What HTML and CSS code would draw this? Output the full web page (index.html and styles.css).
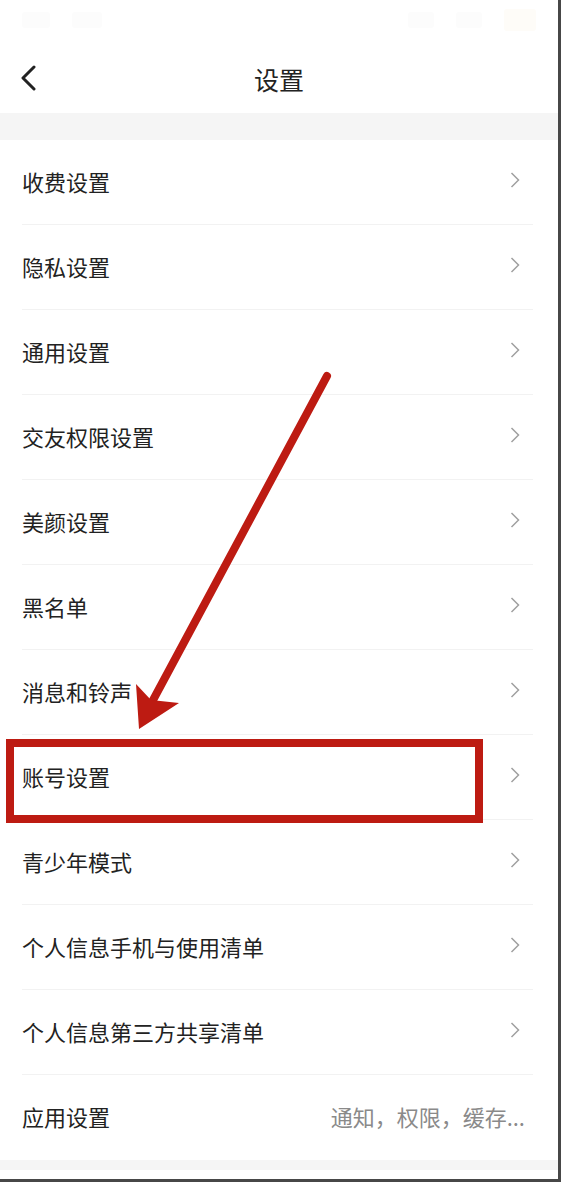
FILE: index.html
```html
<!DOCTYPE html>
<html lang="zh-CN">
<head>
<meta charset="utf-8">
<title>设置</title>
<link rel="stylesheet" href="styles.css">
</head>
<body>
<div class="screen">
  <div class="status">
    <span class="blob b1"></span><span class="blob b2"></span>
    <span class="spacer"></span>
    <span class="blob b3"></span><span class="blob b4"></span><span class="blob b5"></span>
  </div>
  <div class="nav">
    <svg class="back" width="16" height="26" viewBox="0 0 16 26"><path d="M14 2 L3 13 L14 24" fill="none" stroke="#222" stroke-width="3" stroke-linecap="round" stroke-linejoin="round"/></svg>
    <div class="title">设置</div>
  </div>
  <div class="band"></div>
  <ul class="list">
    <li class="row"><span class="label">收费设置</span><svg class="chev" width="10" height="16" viewBox="0 0 10 16"><path d="M1.5 1 L8.5 8 L1.5 15" fill="none" stroke="#a0a0a0" stroke-width="1.5"/></svg></li>
    <li class="row"><span class="label">隐私设置</span><svg class="chev" width="10" height="16" viewBox="0 0 10 16"><path d="M1.5 1 L8.5 8 L1.5 15" fill="none" stroke="#a0a0a0" stroke-width="1.5"/></svg></li>
    <li class="row"><span class="label">通用设置</span><svg class="chev" width="10" height="16" viewBox="0 0 10 16"><path d="M1.5 1 L8.5 8 L1.5 15" fill="none" stroke="#a0a0a0" stroke-width="1.5"/></svg></li>
    <li class="row"><span class="label">交友权限设置</span><svg class="chev" width="10" height="16" viewBox="0 0 10 16"><path d="M1.5 1 L8.5 8 L1.5 15" fill="none" stroke="#a0a0a0" stroke-width="1.5"/></svg></li>
    <li class="row"><span class="label">美颜设置</span><svg class="chev" width="10" height="16" viewBox="0 0 10 16"><path d="M1.5 1 L8.5 8 L1.5 15" fill="none" stroke="#a0a0a0" stroke-width="1.5"/></svg></li>
    <li class="row"><span class="label">黑名单</span><svg class="chev" width="10" height="16" viewBox="0 0 10 16"><path d="M1.5 1 L8.5 8 L1.5 15" fill="none" stroke="#a0a0a0" stroke-width="1.5"/></svg></li>
    <li class="row"><span class="label">消息和铃声</span><svg class="chev" width="10" height="16" viewBox="0 0 10 16"><path d="M1.5 1 L8.5 8 L1.5 15" fill="none" stroke="#a0a0a0" stroke-width="1.5"/></svg></li>
    <li class="row"><span class="label">账号设置</span><svg class="chev" width="10" height="16" viewBox="0 0 10 16"><path d="M1.5 1 L8.5 8 L1.5 15" fill="none" stroke="#a0a0a0" stroke-width="1.5"/></svg></li>
    <li class="row"><span class="label">青少年模式</span><svg class="chev" width="10" height="16" viewBox="0 0 10 16"><path d="M1.5 1 L8.5 8 L1.5 15" fill="none" stroke="#a0a0a0" stroke-width="1.5"/></svg></li>
    <li class="row"><span class="label">个人信息手机与使用清单</span><svg class="chev" width="10" height="16" viewBox="0 0 10 16"><path d="M1.5 1 L8.5 8 L1.5 15" fill="none" stroke="#a0a0a0" stroke-width="1.5"/></svg></li>
    <li class="row"><span class="label">个人信息第三方共享清单</span><svg class="chev" width="10" height="16" viewBox="0 0 10 16"><path d="M1.5 1 L8.5 8 L1.5 15" fill="none" stroke="#a0a0a0" stroke-width="1.5"/></svg></li>
    <li class="row last"><span class="label">应用设置</span><span class="value">通知，权限，缓存...</span></li>
  </ul>
  <div class="band band-bottom"></div>
  <div class="foot"></div>

  <div class="highlight"></div>
  <svg class="arrow" width="558" height="1179" viewBox="0 0 558 1179">
    <line x1="327" y1="376" x2="152" y2="702" stroke="#bd1b12" stroke-width="8" stroke-linecap="round"/>
    <polygon points="139,729 136,684 151,700 179,703" fill="#bd1b12"/>
  </svg>
</div>
</body>
</html>
```

FILE: styles.css
```css
html, body {
  margin: 0;
  padding: 0;
  background: #ffffff;
}

.screen {
  position: relative;
  width: 558px;
  height: 1179px;
  border-right: 3px solid #474747;
  border-bottom: 3px solid #474747;
  background: #ffffff;
  font-family: "Noto Sans CJK SC", "Noto Sans", sans-serif;
  overflow: hidden;
}

.status {
  height: 40px;
  display: flex;
  align-items: center;
  padding: 0 22px;
  gap: 22px;
  box-sizing: border-box;
}

.blob {
  display: block;
  height: 16px;
  background: #fcfcfc;
  border-radius: 3px;
}
.b1 { width: 28px; }
.b2 { width: 30px; }
.b3 { width: 26px; }
.b4 { width: 26px; }
.b5 { width: 32px; height: 22px; background: #fefcf8; }
.spacer { flex: 1; }

.nav {
  height: 73px;
  position: relative;
  display: flex;
  align-items: center;
  justify-content: center;
}

.back {
  position: absolute;
  left: 20px;
  top: 25px;
}

.title {
  font-size: 25px;
  color: #222222;
  line-height: 1;
  margin-top: 6px;
}

.band {
  height: 27px;
  background: #f5f5f5;
}

.list {
  list-style: none;
  margin: 0;
  padding: 0;
}

.row {
  height: 85px;
  display: flex;
  align-items: center;
  justify-content: space-between;
  margin: 0 25px 0 22px;
  border-bottom: 1px solid #f2f2f2;
  box-sizing: border-box;
}

.row.last {
  border-bottom: none;
  margin-right: 33px;
}

.label {
  font-size: 22px;
  color: #222222;
  line-height: 1;
  margin-top: -3px;
}

.chev {
  margin-right: 13px;
  margin-top: -4px;
}

.value {
  font-size: 22px;
  color: #8a8a8a;
  line-height: 1;
  margin-top: -3px;
}

.band-bottom {
  height: 10px;
}

.foot {
  height: 9px;
}

.highlight {
  position: absolute;
  left: 6px;
  top: 739px;
  width: 477px;
  height: 84px;
  border: 8px solid #bd1b12;
  box-sizing: border-box;
}

.arrow {
  position: absolute;
  left: 0;
  top: 0;
  pointer-events: none;
}
```
